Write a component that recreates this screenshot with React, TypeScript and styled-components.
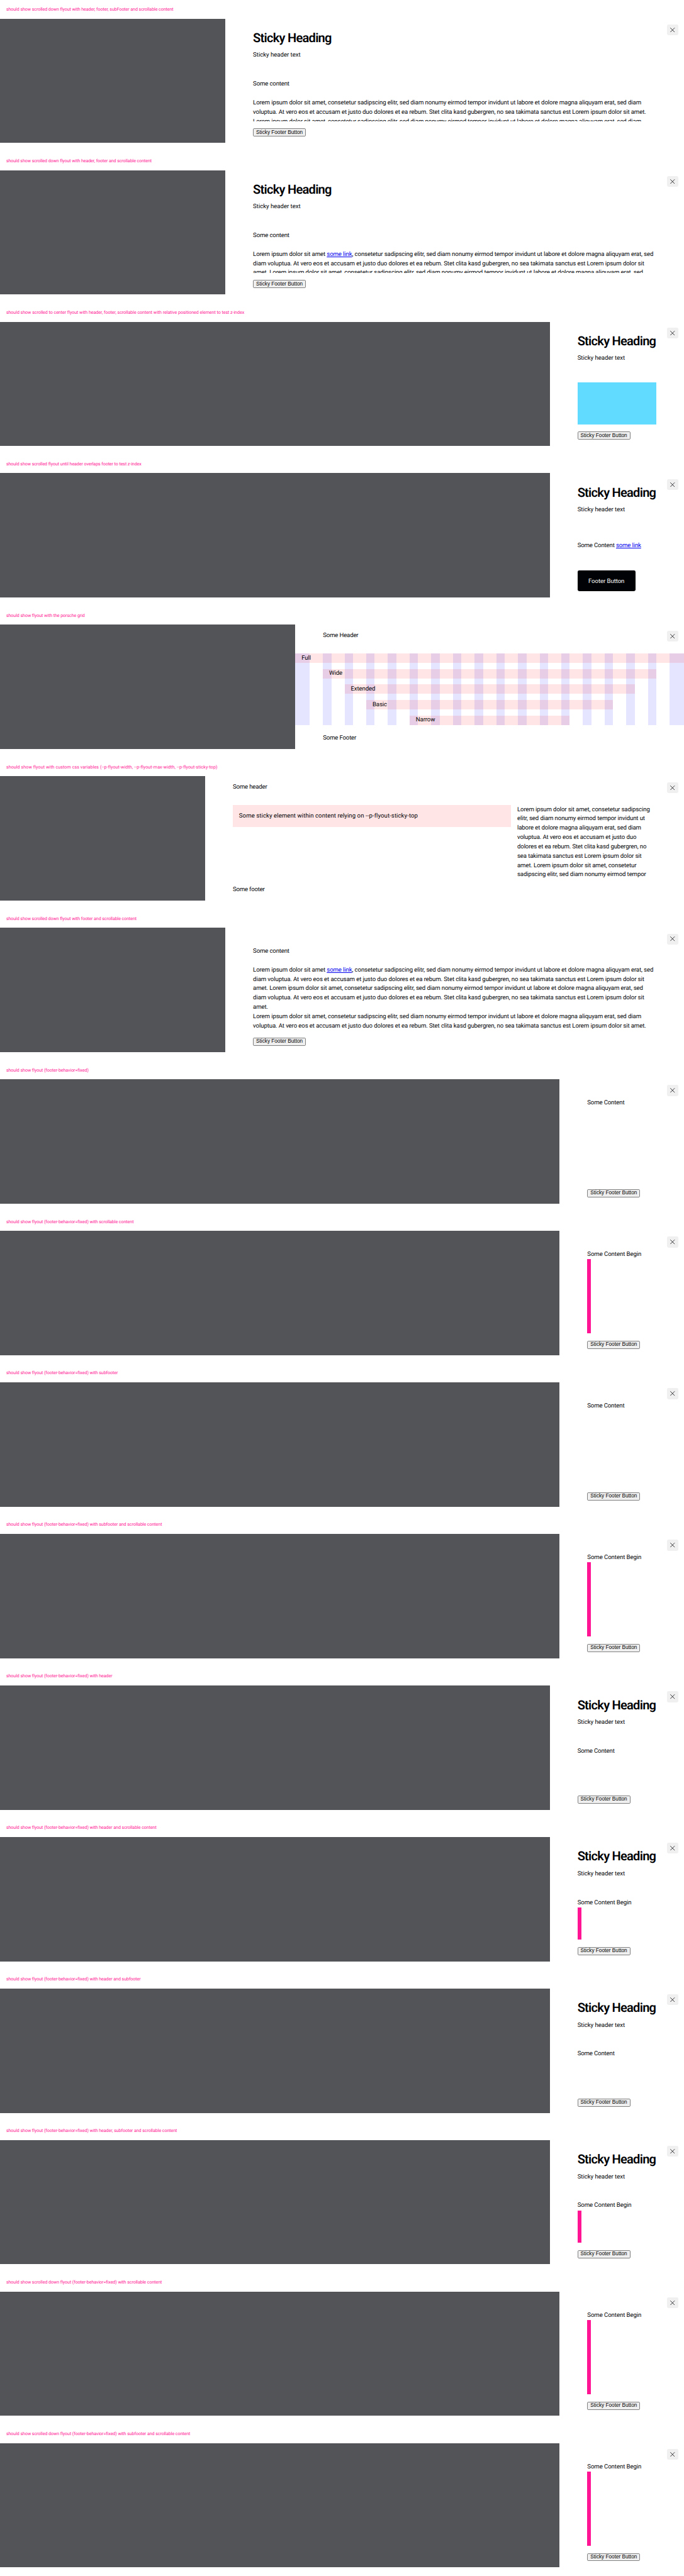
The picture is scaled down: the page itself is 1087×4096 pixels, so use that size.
import React, { ReactNode } from "react";
import styled, { createGlobalStyle } from "styled-components";

/* 1rem stands for ten design pixels. */
const GlobalStyle = createGlobalStyle`
  html { font-size: 6.177px; }
  body { margin: 0; background: #fff; text-rendering: geometricPrecision; }
  *, *::before, *::after { box-sizing: border-box; }
`;

const Page = styled.main`
  width: 100%;
  height: 4096px;
  overflow: hidden;
  display: grid;
  grid-template-rows: repeat(17, minmax(0, 1fr));
  color: #010205;
  font-family: Roboto, "Liberation Sans", sans-serif;
`;

const Story = styled.section`
  display: flex;
  flex-direction: column;
  min-width: 0;
`;

const StoryTitle = styled.h2<{ $tracking: number }>`
  margin: 0;
  height: 4.8rem;
  flex: none;
  padding-left: 1.6rem;
  font-size: 1.15rem;
  font-weight: 400;
  line-height: 4.8rem;
  letter-spacing: ${(p) => p.$tracking / 10}rem;
  white-space: nowrap;
  color: #ff1493;
`;

const Stage = styled.div`
  display: flex;
  height: 32rem;
  flex: none;
  background: #535457;
`;

const Panel = styled.aside<{ $width: number }>`
  position: relative;
  display: flex;
  flex-direction: column;
  width: ${(p) => p.$width / 10}rem;
  height: 100%;
  margin-left: auto;
  background: #fff;
`;

const CloseButton = styled.button`
  position: absolute;
  top: 1.5rem;
  right: 1.5rem;
  z-index: 2;
  display: grid;
  place-items: center;
  width: 2.8rem;
  height: 2.8rem;
  padding: 0;
  border: 0;
  border-radius: 0.4rem;
  background: #f0f0f1;
  color: #010205;

  svg {
    display: block;
    width: 1.2rem;
    height: 1.2rem;
  }
`;

const Header = styled.header<{ $size: "none" | "text" | "heading" }>`
  flex: none;
  height: ${(p) => ({ none: 4.9, text: 7.4, heading: 15.7 })[p.$size]}rem;
  padding: ${(p) => ({ none: 0, text: 1.6, heading: 3 })[p.$size]}rem 7.12rem 0;
`;

const Heading = styled.h3`
  margin: 0 0 1.3rem;
  font-size: 3.25rem;
  font-weight: 600;
  line-height: 4rem;
  letter-spacing: -0.121rem;
  white-space: nowrap;
`;

const Text = styled.p<{ $tracking?: number; $gap?: number }>`
  margin: 0 0 ${(p) => (p.$gap ?? 0) / 10 - 0.1}rem;
  padding-top: 0.1rem;
  font-size: 1.56rem;
  line-height: 2.4rem;
  letter-spacing: ${(p) => (p.$tracking ?? -0.18) / 10}rem;
  white-space: nowrap;
`;

const Link = styled.a`
  color: #0000ee;
  text-decoration: underline;
`;

const Content = styled.div<{ $bleed?: boolean; $offset?: number }>`
  flex: 1;
  min-height: 0;
  overflow: hidden;
  padding: ${(p) => (p.$offset ?? 0) / 10}rem ${(p) => (p.$bleed ? 0 : 7.12)}rem 0;
`;

const Footer = styled.footer<{ $height?: number; $top?: number }>`
  flex: none;
  height: ${(p) => (p.$height ?? 56) / 10}rem;
  padding: ${(p) => (p.$top ?? 19) / 10}rem 7.12rem 0;
`;

const NativeButton = styled.button`
  display: block;
  width: 13.6rem;
  height: 2.1rem;
  padding: 0;
  border: 1px solid #808080;
  border-radius: 0.3rem;
  background: #efefef;
  color: #000;
  font-family: "Liberation Sans", Arial, sans-serif;
  font-size: 1.3333rem;
  line-height: 1.7rem;
  white-space: nowrap;
`;

const PrimaryButton = styled.button`
  display: block;
  width: 14.9rem;
  height: 5.4rem;
  padding: 0;
  border: 0;
  border-radius: 0.4rem;
  background: #010205;
  color: #fff;
  font-family: inherit;
  font-size: 1.56rem;
  letter-spacing: -0.012rem;
`;

const CyanBlock = styled.div`
  height: 100%;
  background: #61dbff;
`;

const PinkBar = styled.div`
  width: 1rem;
  height: 100rem;
  background: #ff1493;
`;

const PorscheGrid = styled.div`
  display: grid;
  grid-template-columns: 3.7rem repeat(16, minmax(0, 1fr)) 3.7rem;
  grid-template-rows: repeat(5, 2.4rem);
  column-gap: 3.4rem;
  row-gap: 1.6rem;
`;

const GridColumn = styled.div<{ $col: number }>`
  grid-column: ${(p) => p.$col};
  grid-row: 1 / -1;
  background: rgba(0, 0, 255, 0.1);
`;

const GridBar = styled.div<{ $from: number; $to: number; $row: number }>`
  grid-column: ${(p) => p.$from} / ${(p) => p.$to};
  grid-row: ${(p) => p.$row};
  padding-left: 1.6rem;
  background: rgba(255, 0, 0, 0.1);
`;

const Split = styled.div`
  display: grid;
  grid-template-columns: minmax(0, 2fr) minmax(0, 1fr);
  align-items: start;
  gap: 1.6rem;
`;

const StickyNote = styled.div`
  height: 5.6rem;
  padding: 1.6rem;
  background: #ffe5e5;
`;

const Close = () => (
  <CloseButton aria-label="Dismiss flyout">
    <svg viewBox="0 0 12 12" fill="none" stroke="currentColor" strokeWidth="1.25">
      <path d="M0.4 0.4 11.6 11.6M11.6 0.4 0.4 11.6" />
    </svg>
  </CloseButton>
);

type FlyoutProps = {
  title: string;
  titleTracking?: number;
  width: number;
  header?: string;
  heading?: boolean;
  footer?: ReactNode;
  bleed?: boolean;
  offset?: number;
  children: ReactNode;
};

const stickyFooter = (
  <Footer>
    <NativeButton>Sticky Footer Button</NativeButton>
  </Footer>
);

const Flyout = ({
  title,
  titleTracking = -0.1,
  width,
  header,
  heading,
  footer = stickyFooter,
  bleed,
  offset,
  children,
}: FlyoutProps) => (
  <Story>
    <StoryTitle $tracking={titleTracking}>{title}</StoryTitle>
    <Stage>
      <Panel $width={width}>
        <Close />
        <Header $size={heading ? "heading" : header ? "text" : "none"}>
          {heading && <Heading>Sticky Heading</Heading>}
          {heading && <Text $tracking={-0.05}>Sticky header text</Text>}
          {header && <Text $tracking={-0.3}>{header}</Text>}
        </Header>
        <Content $bleed={bleed} $offset={offset}>
          {children}
        </Content>
        {footer}
      </Panel>
    </Stage>
  </Story>
);

const lines = (items: ReactNode[]) =>
  items.map((item, i) => (
    <React.Fragment key={i}>
      {i > 0 && <br />}
      {item}
    </React.Fragment>
  ));

const FIRST =
  "Lorem ipsum dolor sit amet, consetetur sadipscing elitr, sed diam nonumy eirmod tempor invidunt ut labore et dolore magna aliquyam erat, sed diam";
const SECOND =
  "voluptua. At vero eos et accusam et justo duo dolores et ea rebum. Stet clita kasd gubergren, no sea takimata sanctus est Lorem ipsum dolor sit amet.";
const LINKED = (
  <>
    Lorem ipsum dolor sit amet <Link href="#">some link</Link>, consetetur sadipscing elitr, sed diam nonumy eirmod tempor
    invidunt ut labore et dolore magna aliquyam erat, sed
  </>
);
const DIAM =
  "diam voluptua. At vero eos et accusam et justo duo dolores et ea rebum. Stet clita kasd gubergren, no sea takimata sanctus est Lorem ipsum dolor sit";
const AMET =
  "amet. Lorem ipsum dolor sit amet, consetetur sadipscing elitr, sed diam nonumy eirmod tempor invidunt ut labore et dolore magna aliquyam erat, sed";

const NARROW_COLUMN = [
  "Lorem ipsum dolor sit amet, consetetur sadipscing",
  "elitr, sed diam nonumy eirmod tempor invidunt ut",
  "labore et dolore magna aliquyam erat, sed diam",
  "voluptua. At vero eos et accusam et justo duo",
  "dolores et ea rebum. Stet clita kasd gubergren, no",
  "sea takimata sanctus est Lorem ipsum dolor sit",
  "amet. Lorem ipsum dolor sit amet, consetetur",
  "sadipscing elitr, sed diam nonumy eirmod tempor",
];

const BARS: [string, number, number][] = [
  ["Full", 1, 19],
  ["Wide", 2, 18],
  ["Extended", 3, 17],
  ["Basic", 4, 16],
  ["Narrow", 6, 14],
];

const FIXED: { suffix: string; heading?: boolean; scrollable?: boolean; scrolled?: boolean }[] = [
  { suffix: "" },
  { suffix: " with scrollable content", scrollable: true },
  { suffix: " with subfooter" },
  { suffix: " with subfooter and scrollable content", scrollable: true },
  { suffix: " with header", heading: true },
  { suffix: " with header and scrollable content", heading: true, scrollable: true },
  { suffix: " with header and subfooter", heading: true },
  { suffix: " with header, subfooter and scrollable content", heading: true, scrollable: true },
  { suffix: " with scrollable content", scrollable: true, scrolled: true },
  { suffix: " with subfooter and scrollable content", scrollable: true, scrolled: true },
];

export default function App() {
  return (
    <>
      <GlobalStyle />
      <Page>
        <Flyout
          title="should show scrolled down flyout with header, footer, subFooter and scrollable content"
          titleTracking={-0.115}
          width={1180}
          heading
        >
          <Text $gap={24} $tracking={-0.26}>Some content</Text>
          <Text>{lines([FIRST, SECOND, FIRST])}</Text>
        </Flyout>

        <Flyout
          title="should show scrolled down flyout with header, footer and scrollable content"
          titleTracking={-0.13}
          width={1180}
          heading
        >
          <Text $gap={24} $tracking={-0.26}>Some content</Text>
          <Text>{lines([LINKED, DIAM, AMET])}</Text>
        </Flyout>

        <Flyout
          title="should show scrolled to center flyout with header, footer, scrollable content with relative positioned element to test z-index"
          titleTracking={-0.062}
          width={345.4}
          heading
        >
          <CyanBlock />
        </Flyout>

        <Flyout
          title="should show scrolled flyout until header overlaps footer to test z-index"
          titleTracking={-0.126}
          width={345.4}
          heading
          offset={17}
          footer={
            <Footer $height={86} $top={16}>
              <PrimaryButton>Footer Button</PrimaryButton>
            </Footer>
          }
        >
          <Text $tracking={-0.25}>
            Some Content <Link href="#">some link</Link>
          </Text>
        </Flyout>

        <Flyout
          title="should show flyout with the porsche grid"
          width={1000}
          header="Some Header"
          bleed
          footer={
            <Footer $top={16}>
              <Text $tracking={-0.3}>Some Footer</Text>
            </Footer>
          }
        >
          <PorscheGrid>
            {Array.from({ length: 18 }, (_, i) => (
              <GridColumn key={i} $col={i + 1} />
            ))}
            {BARS.map(([name, from, to], i) => (
              <GridBar key={name} $from={from} $to={to} $row={i + 1}>
                <Text>{name}</Text>
              </GridBar>
            ))}
          </PorscheGrid>
        </Flyout>

        <Flyout
          title="should show flyout with custom css variables (--p-flyout-width, --p-flyout-max-width, --p-flyout-sticky-top)"
          titleTracking={0.154}
          width={1232}
          header="Some header"
          footer={
            <Footer $top={16}>
              <Text $tracking={-0.35}>Some footer</Text>
            </Footer>
          }
        >
          <Split>
            <StickyNote>
              <Text $tracking={0.103}>Some sticky element within content relying on --p-flyout-sticky-top</Text>
            </StickyNote>
            <Text $tracking={-0.2}>{lines(NARROW_COLUMN)}</Text>
          </Split>
        </Flyout>

        <Flyout
          title="should show scrolled down flyout with footer and scrollable content"
          titleTracking={-0.134}
          width={1180}
        >
          <Text $gap={24} $tracking={-0.26}>Some content</Text>
          <Text>{lines([LINKED, DIAM, AMET, DIAM, "amet."])}</Text>
          <Text>{lines([FIRST, SECOND])}</Text>
        </Flyout>

        {FIXED.map(({ suffix, heading, scrollable, scrolled }) => (
          <Flyout
            key={`${scrolled}${suffix}`}
            title={`should show ${scrolled ? "scrolled down " : ""}flyout (footer-behavior=fixed)${suffix}`}
            width={heading ? 345.4 : 320}
            heading={heading}
          >
            <Text $tracking={scrollable ? -0.14 : -0.25}>{scrollable ? "Some Content Begin" : "Some Content"}</Text>
            {scrollable && <PinkBar />}
          </Flyout>
        ))}
      </Page>
    </>
  );
}
